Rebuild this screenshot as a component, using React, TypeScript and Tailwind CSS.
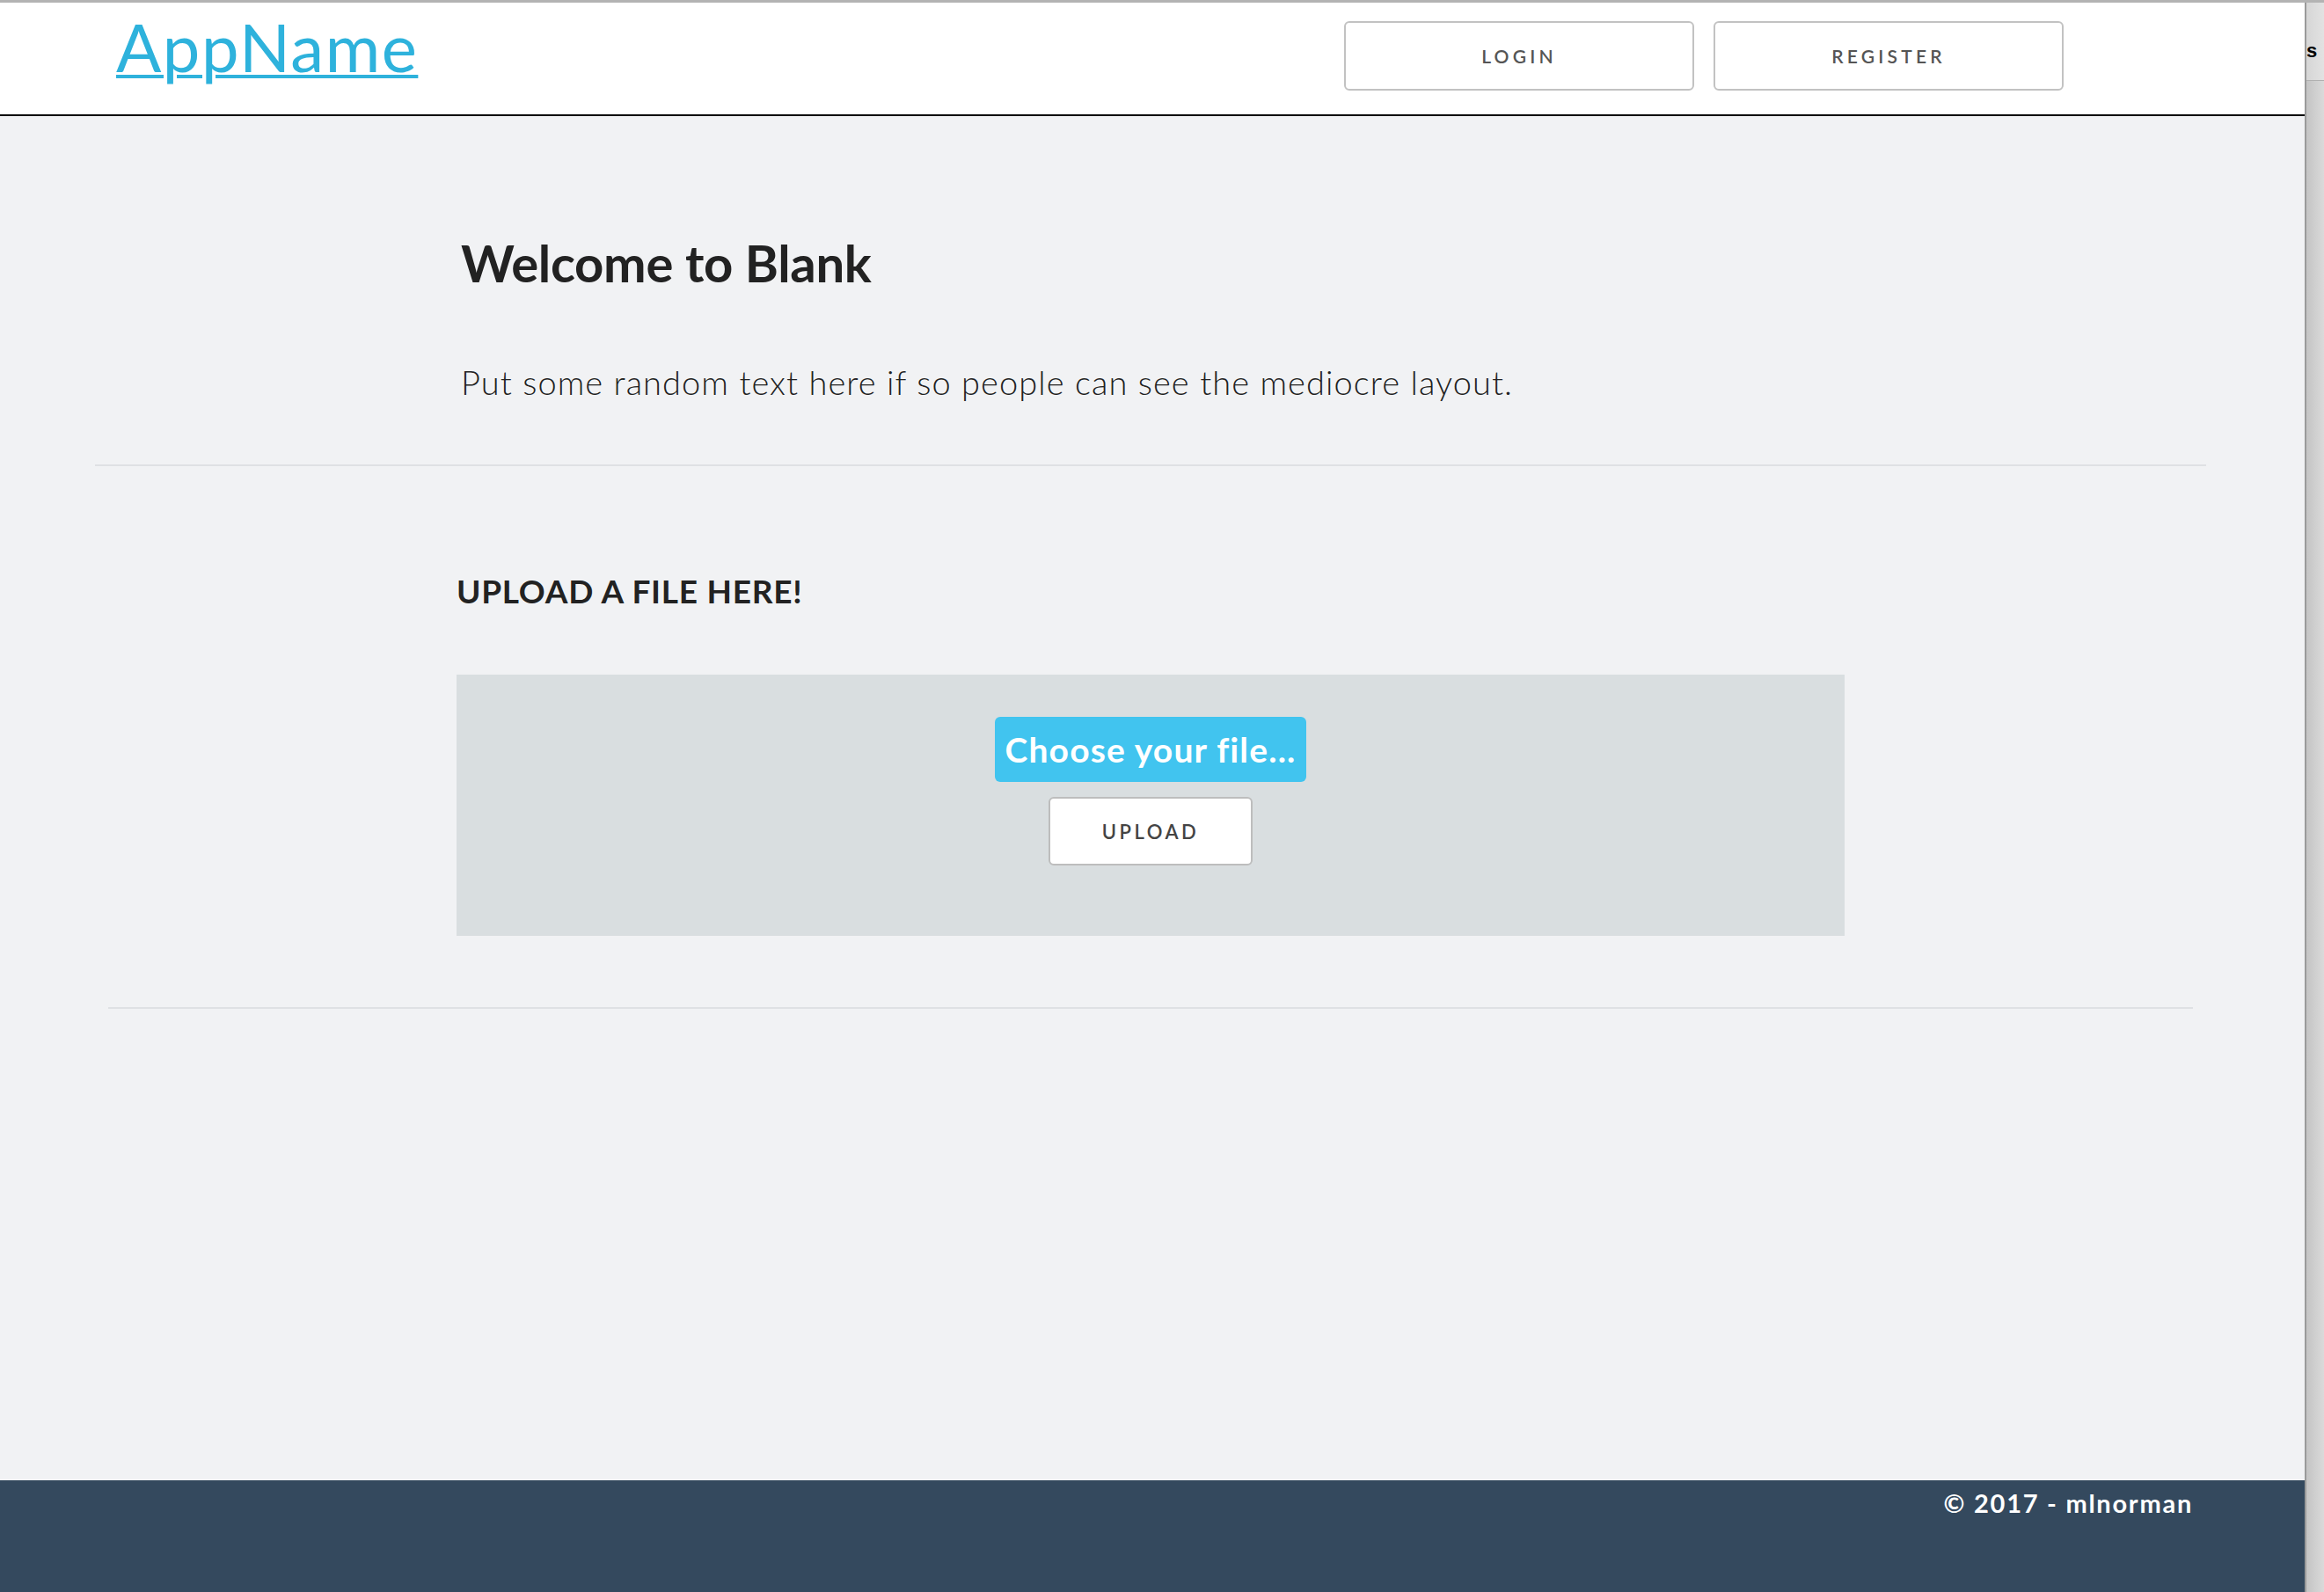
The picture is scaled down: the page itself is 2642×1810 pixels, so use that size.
import React from "react";

export default function App() {
  const font = { fontFamily: "Lato, 'Open Sans', 'Liberation Sans', sans-serif" };
  return (
    <div className="flex w-[2642px] h-[1810px] border-t-[3px] border-[#b3b3b3] overflow-hidden" style={font}>
      <div className="flex flex-col w-[2620px] h-full">
        <header className="flex justify-between items-start h-[129px] bg-white border-b-2 border-black pl-[132px] pr-[274px]">
          <a className="mt-[12px] text-[76px] leading-[76px] text-[#2eb2dc] underline decoration-[4px] underline-offset-[3px] tracking-[0.02em]" href="#">
            AppName
          </a>
          <div className="flex gap-[22px] mt-[21px]">
            <button className="w-[398px] h-[79px] bg-white border-2 border-[#c2c2c2] rounded-[6px] text-[21px] font-semibold tracking-[0.2em] text-[#555]">
              LOGIN
            </button>
            <button className="w-[398px] h-[79px] bg-white border-2 border-[#c2c2c2] rounded-[6px] text-[21px] font-semibold tracking-[0.2em] text-[#555]">
              REGISTER
            </button>
          </div>
        </header>

        <main className="flex-1 bg-[#f1f2f4] flex flex-col items-center pr-[4px]">
          <div className="w-[1578px] mt-[132px]">
            <h1 className="text-[58px] leading-[70px] font-bold text-[#222] tracking-[-0.005em] pl-[5px]">
              Welcome to Blank
            </h1>
            <p className="mt-[77px] text-[38px] leading-[46px] font-light text-[#222] tracking-[0.028em] pl-[5px]">
              Put some random text here if so people can see the mediocre layout.
            </p>
          </div>
          <div className="w-[2400px] h-[2px] bg-[#dfe1e4] mt-[71px]" />
          <div className="w-[1578px] mt-[119px]">
            <h2 className="text-[37px] leading-[45px] font-bold text-[#222] tracking-[0.02em]">UPLOAD A FILE HERE!</h2>
            <div className="mt-[73px] h-[297px] bg-[#d9dee0] flex flex-col items-center pt-[48px]">
              <label className="w-[354px] h-[74px] bg-[#41c4ef] rounded-[6px] flex items-center justify-center text-white text-[39px] font-bold tracking-[0.03em]">
                Choose your file...
              </label>
              <button className="mt-[17px] w-[232px] h-[78px] bg-white border-2 border-[#bdbdbd] rounded-[6px] text-[22px] font-semibold tracking-[0.16em] text-[#444]">
                UPLOAD
              </button>
            </div>
          </div>
          <div className="w-[2370px] h-[2px] bg-[#dfe1e4] mt-[81px]" />
        </main>

        <footer className="h-[127px] bg-[#34495e] flex flex-col items-center pr-[4px]">
          <div className="w-[2370px] text-right pt-[9px] text-[29px] leading-[34px] font-bold text-white tracking-[0.06em]">
            © 2017 - mlnorman
          </div>
        </footer>
      </div>
      <div className="w-[22px] h-full border-l-2 border-[#9a9a9a] bg-gradient-to-r from-[#c4c4c4] to-[#dadada] flex flex-col">
        <div className="h-[89px] border-b border-[#b0b0b0] bg-gradient-to-r from-[#d6d6d6] to-[#e2e2e2] overflow-hidden">
          <span className="block ml-[0px] mt-[44px] text-[22px] leading-[22px] font-bold text-black" style={{ fontFamily: "'Liberation Sans', sans-serif" }}>
            s
          </span>
        </div>
      </div>
    </div>
  );
}
